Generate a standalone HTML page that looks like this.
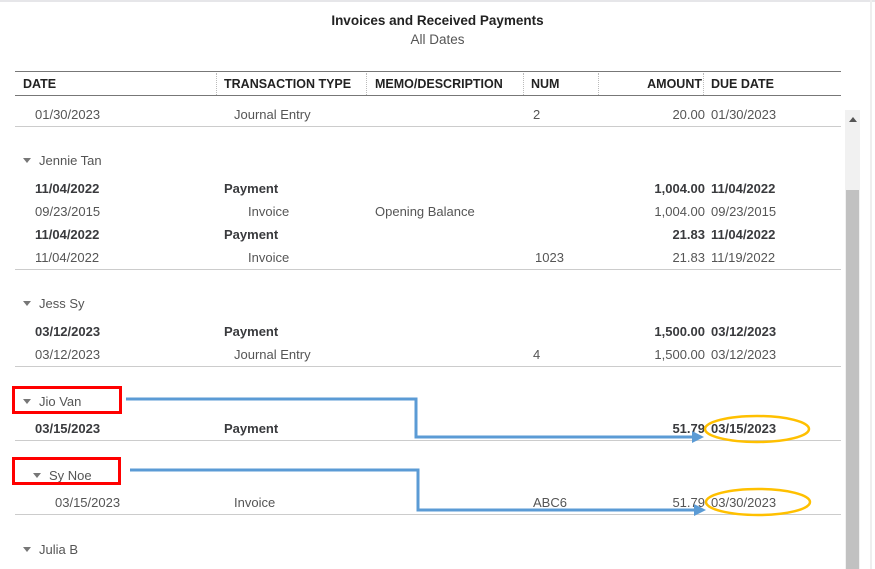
<html><head><style>
body{margin:0;width:875px;height:569px;overflow:hidden;background:#fff;font-family:"Liberation Sans",sans-serif;color:#555;position:relative}
.t{position:absolute;font-size:13px;white-space:nowrap;line-height:16px}
.b{font-weight:bold;color:#393a3d}
.h{font-weight:bold;color:#222;font-size:12.5px}
.r{text-align:right}
.ln{position:absolute;left:15px;width:826px;height:1px;background:#ccc}
.sep{position:absolute;top:73px;height:22px;border-left:1px dotted #bbb}
.tri{position:absolute;width:0;height:0;border-left:4px solid transparent;border-right:4px solid transparent;border-top:5px solid #777}
</style></head><body>
<div style="position:absolute;left:0;top:0;width:875px;height:2px;background:#e6e6e9"></div>
<div style="position:absolute;left:870px;top:0;width:2px;height:569px;background:#eee"></div>
<div class="t b" style="left:0;width:875px;text-align:center;top:13px;color:#222;font-size:13.5px">Invoices and Received Payments</div>
<div class="t" style="left:0;width:875px;text-align:center;top:32px;font-size:13.5px">All Dates</div>
<div style="position:absolute;left:15px;top:71px;width:826px;height:1px;background:#777"></div>
<div style="position:absolute;left:15px;top:95px;width:826px;height:1px;background:#777"></div>
<div class="sep" style="left:216px"></div><div class="sep" style="left:366px"></div><div class="sep" style="left:523px"></div><div class="sep" style="left:598px"></div><div class="sep" style="left:703px"></div>
<div class="t h" style="left:23px;top:76px">DATE</div>
<div class="t h" style="left:224px;top:76px">TRANSACTION TYPE</div>
<div class="t h" style="left:375px;top:76px">MEMO/DESCRIPTION</div>
<div class="t h" style="left:531px;top:76px">NUM</div>
<div class="t h r" style="left:600px;width:102px;top:76px">AMOUNT</div>
<div class="t h" style="left:711px;top:76px">DUE DATE</div>
<div style="position:absolute;left:845px;top:110px;width:15px;height:459px;background:#f1f1f1"></div>
<div style="position:absolute;left:849px;top:117px;border-left:4px solid transparent;border-right:4px solid transparent;border-bottom:5px solid #555"></div>
<div style="position:absolute;left:846px;top:190px;width:13px;height:379px;background:#c1c1c1"></div>

<div class="t" style="left:35px;top:107px">01/30/2023</div><div class="t" style="left:234px;top:107px">Journal Entry</div><div class="t" style="left:533px;top:107px">2</div><div class="t r" style="left:600px;width:105px;top:107px">20.00</div><div class="t" style="left:711px;top:107px">01/30/2023</div>
<div class="ln" style="top:126px"></div>

<div class="tri" style="left:23px;top:158px"></div><div class="t" style="left:39px;top:153px">Jennie Tan</div>
<div class="t b" style="left:35px;top:181px">11/04/2022</div><div class="t b" style="left:224px;top:181px">Payment</div><div class="t b r" style="left:600px;width:105px;top:181px">1,004.00</div><div class="t b" style="left:711px;top:181px">11/04/2022</div>
<div class="t" style="left:35px;top:204px">09/23/2015</div><div class="t" style="left:248px;top:204px">Invoice</div><div class="t" style="left:375px;top:204px">Opening Balance</div><div class="t r" style="left:600px;width:105px;top:204px">1,004.00</div><div class="t" style="left:711px;top:204px">09/23/2015</div>
<div class="t b" style="left:35px;top:227px">11/04/2022</div><div class="t b" style="left:224px;top:227px">Payment</div><div class="t b r" style="left:600px;width:105px;top:227px">21.83</div><div class="t b" style="left:711px;top:227px">11/04/2022</div>
<div class="t" style="left:35px;top:250px">11/04/2022</div><div class="t" style="left:248px;top:250px">Invoice</div><div class="t" style="left:535px;top:250px">1023</div><div class="t r" style="left:600px;width:105px;top:250px">21.83</div><div class="t" style="left:711px;top:250px">11/19/2022</div>
<div class="ln" style="top:269px"></div>

<div class="tri" style="left:23px;top:301px"></div><div class="t" style="left:39px;top:296px">Jess Sy</div>
<div class="t b" style="left:35px;top:324px">03/12/2023</div><div class="t b" style="left:224px;top:324px">Payment</div><div class="t b r" style="left:600px;width:105px;top:324px">1,500.00</div><div class="t b" style="left:711px;top:324px">03/12/2023</div>
<div class="t" style="left:35px;top:347px">03/12/2023</div><div class="t" style="left:234px;top:347px">Journal Entry</div><div class="t" style="left:533px;top:347px">4</div><div class="t r" style="left:600px;width:105px;top:347px">1,500.00</div><div class="t" style="left:711px;top:347px">03/12/2023</div>
<div class="ln" style="top:366px"></div>

<div class="tri" style="left:23px;top:399px"></div><div class="t" style="left:39px;top:394px">Jio Van</div>
<div class="t b" style="left:35px;top:421px">03/15/2023</div><div class="t b" style="left:224px;top:421px">Payment</div><div class="t b r" style="left:600px;width:105px;top:421px">51.79</div><div class="t b" style="left:711px;top:421px">03/15/2023</div>
<div class="ln" style="top:440px"></div>

<div class="tri" style="left:33px;top:473px"></div><div class="t" style="left:49px;top:468px">Sy Noe</div>
<div class="t" style="left:55px;top:495px">03/15/2023</div><div class="t" style="left:234px;top:495px">Invoice</div><div class="t" style="left:533px;top:495px">ABC6</div><div class="t r" style="left:600px;width:105px;top:495px">51.79</div><div class="t" style="left:711px;top:495px">03/30/2023</div>
<div class="ln" style="top:514px"></div>

<div class="tri" style="left:23px;top:547px"></div><div class="t" style="left:39px;top:542px">Julia B</div>

<svg style="position:absolute;left:0;top:0" width="875" height="569">
<rect x="13.5" y="387.5" width="107" height="25" fill="none" stroke="#f00" stroke-width="3"/>
<rect x="13.5" y="458.5" width="106" height="25" fill="none" stroke="#f00" stroke-width="3"/>
<polyline points="126,399 416,399 416,437 694,437" fill="none" stroke="#5b9bd5" stroke-width="3"/>
<polygon points="692,431 704,437 692,443" fill="#5b9bd5"/>
<polyline points="130,470 418,470 418,510 696,510" fill="none" stroke="#5b9bd5" stroke-width="3"/>
<polygon points="694,504 706,510 694,516" fill="#5b9bd5"/>
<ellipse cx="757" cy="429" rx="52" ry="13" fill="none" stroke="#ffc000" stroke-width="2.5"/>
<ellipse cx="758" cy="502" rx="52" ry="13" fill="none" stroke="#ffc000" stroke-width="2.5"/>
</svg>
</body></html>
